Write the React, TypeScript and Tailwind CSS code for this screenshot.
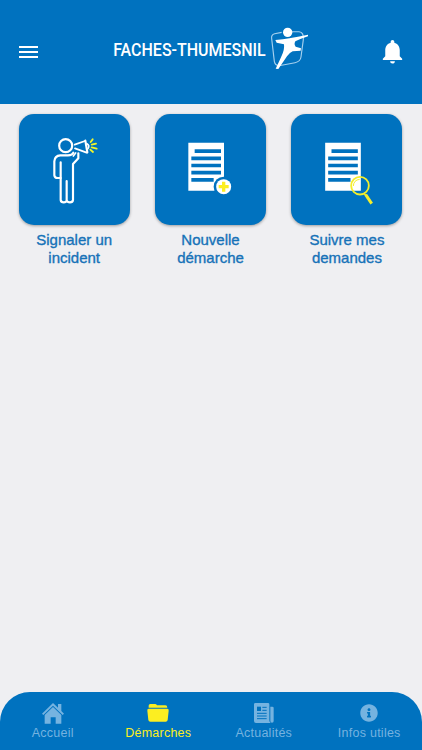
import { FaInfoCircle } from 'react-icons/fa';
import { MdNotifications } from 'react-icons/md';

function Logo() {
  return (
    <svg width="200" height="50" viewBox="0 0 200 50" className="block">
      <text
        x="2.2"
        y="31"
        fill="#fff"
        fontFamily="Roboto, 'Open Sans', sans-serif"
        fontWeight="500"
        fontSize="18.4"
        textLength="152.5"
        lengthAdjust="spacingAndGlyphs"
      >
        FACHES-THUMESNIL
      </text>
      <g transform="translate(149 -5.3) scale(.3333)">
        <path
          d="M65 38 L44 42 Q33 45 35 57 L43 125 Q45 137 57 138 L105 129 Q121 126 123 112 L130 60 Q132 37 117 36 L95 36"
          fill="none"
          stroke="#a5d0ee"
          strokeWidth="3.4"
        />
        <circle cx="83" cy="38" r="14" fill="#fff" />
        <path
          d="M46 61 Q70 59 88 56 Q120 50 144 45 L144 50 Q120 58 106 65 Q101 74 107 81 L123 86 L122 93 L98 95 Q87 100 81 110 L55 148 L47 147 Q59 122 65 108 Q74 90 72 74 L50 69 Z"
          fill="#fff"
        />
      </g>
    </svg>
  );
}

function PersonIcon() {
  return (
    <svg viewBox="-79 -48 333 333" className="size-full" fill="none" strokeLinecap="round" strokeLinejoin="round">
      <g stroke="#fff" strokeWidth="6.5">
        <circle cx="61" cy="47" r="19.5" />
        <path d="M84 68 Q81 76 68 76 H45 Q28 77 27 94 V136 Q28 144 37 144 H46" />
        <path d="M46 97 V210 Q47 217 55 217 Q63 217 64 211 V153 V211 Q66 217 74 217 Q82 217 83 210 V102 L99 85 V70" />
        <path d="M84 78 L91 69" strokeWidth="5" />
        <path d="M88 44 L119 33 M89 55 L124 68" strokeWidth="5.5" />
        <path d="M120 32 L126 67" />
        <path d="M125 41 Q134 46 128 56" strokeWidth="5" />
      </g>
      <path d="M136 36 L142 28 M139 44 L152 41 M139 52 L154 56 M135 59 L143 66" stroke="#f0f52b" strokeWidth="5.5" />
    </svg>
  );
}

function Sheet() {
  return (
    <>
      <path d="M25 38 H132 V182 H25 Z" fill="#fff" />
      <path d="M44 63.5 H123 M34 85 H123 M34 106.5 H123 M34 128 H123 M34 149.5 H101" stroke="#0072bf" strokeWidth="11" />
    </>
  );
}

function NewRequestIcon() {
  return (
    <svg viewBox="-75 -48 333 333" className="size-full" fill="none">
      <Sheet />
      <circle cx="131" cy="170" r="30" fill="#0072bf" />
      <circle cx="131" cy="170" r="22.5" fill="#fff" />
      <path d="M131 155 V185 M116 170 H146" stroke="#fcee21" strokeWidth="10" />
    </svg>
  );
}

function FollowIcon() {
  return (
    <svg viewBox="-73 -48 333 333" className="size-full" fill="none">
      <g transform="translate(4.5 0)">
        <Sheet />
      </g>
      <circle cx="134" cy="167" r="26.5" stroke="#f4ee2c" strokeWidth="5.5" />
      <path d="M114 168 Q115 150 133 148" stroke="#f4ee2c" strokeWidth="3" />
      <path d="M147 191 L151 196" stroke="#f4ee2c" strokeWidth="5" />
      <path d="M151 194 L169 221" stroke="#f4ee2c" strokeWidth="9" />
    </svg>
  );
}

function HomeIcon() {
  return (
    <svg width="22" height="21" viewBox="0 0 66 63" fill="currentColor">
      <path d="M33 0 L48 14 V3 H58 V24 L66 32 L62 36 L33 8 L4 36 L0 32 Z" />
      <path d="M33 12 L58 36 V62 H41 V43 H26 V62 H8 V36 Z" />
    </svg>
  );
}

function FolderIcon() {
  return (
    <svg width="22" height="18" viewBox="0 0 66 54" fill="currentColor">
      <path d="M5 11 V5 Q5 0 10 0 H24 Q28 0 30 4 H55 Q61 4 61 11 Z" />
      <path d="M5 14 H61 Q66 14 65 20 L62 48 Q61 53 56 53 H10 Q5 53 4 48 L1 20 Q0 14 5 14 Z" />
    </svg>
  );
}

function NewsIcon() {
  return (
    <svg width="20" height="20" viewBox="0 0 60 60">
      <path d="M4 0 H42 Q46 0 46 4 V52 Q46 57 50 60 H6 Q0 60 0 54 V4 Q0 0 4 0 Z" fill="currentColor" />
      <path d="M49 11 H55 Q59 11 59 15 V54 Q59 59 54 59 Q49 59 49 54 Z" fill="currentColor" />
      <path d="M9 11 H21 V24 H9 Z" fill="#0072bf" />
      <path d="M25 13 H38 M25 22 H38 M9 31 H38 M9 39 H38 M9 47 H38" stroke="#0072bf" strokeWidth="3" />
    </svg>
  );
}

const actions = [
  { lines: ['Signaler un', 'incident'], icon: <PersonIcon /> },
  { lines: ['Nouvelle', 'démarche'], icon: <NewRequestIcon /> },
  { lines: ['Suivre mes', 'demandes'], icon: <FollowIcon /> },
];

const tabs = [
  { label: 'Accueil', icon: <HomeIcon /> },
  { label: 'Démarches', icon: <FolderIcon />, active: true },
  { label: 'Actualités', icon: <NewsIcon /> },
  { label: 'Infos utiles', icon: <FaInfoCircle size={18} /> },
];

export default function App() {
  return (
    <div className="flex h-[750px] w-[422px] flex-col overflow-hidden bg-[#efeff2] font-['Liberation_Sans',Arial,sans-serif]">
      <header className="flex h-[104px] shrink-0 items-center bg-[#0072bf] pr-[15px] pl-[19px]">
        <button aria-label="Menu" className="flex w-[19px] flex-col gap-[3px]">
          <span className="h-[2px] bg-white" />
          <span className="h-[2px] bg-white" />
          <span className="h-[2px] bg-white" />
        </button>
        <div className="ml-[73px] pb-[4px]">
          <Logo />
        </div>
        <button aria-label="Notifications" className="ml-auto pb-[2px] text-white">
          <MdNotifications size={29} />
        </button>
      </header>

      <main className="flex flex-1 items-start justify-between pt-[10px] pr-[19.6px] pl-[18.7px]">
        {actions.map((action) => (
          <button key={action.lines[0]} className="flex w-[111px] flex-col items-center">
            <span className="block size-[111px] rounded-[15px] bg-[#0072bf] shadow-[0_1px_3px_rgba(0,0,0,0.35)]">
              {action.icon}
            </span>
            <span className="mt-[6px] text-center text-[15px] leading-[18px] text-[#1672b8] [-webkit-text-stroke:0.35px_#1672b8]">
              {action.lines[0]}
              <br />
              {action.lines[1]}
            </span>
          </button>
        ))}
      </main>

      <nav className="grid h-[58px] shrink-0 grid-cols-4 rounded-t-[30px] bg-[#0072bf]">
        {tabs.map((tab) => (
          <button
            key={tab.label}
            className={`flex flex-col items-center pt-[10px] ${tab.active ? 'text-[#fcee21]' : 'text-[#75b3e0]'}`}
          >
            <span className="flex h-[22px] items-center">{tab.icon}</span>
            <span className="mt-[2px] text-[12.5px] leading-[15px] tracking-[0.25px] whitespace-nowrap">{tab.label}</span>
          </button>
        ))}
      </nav>
    </div>
  );
}
